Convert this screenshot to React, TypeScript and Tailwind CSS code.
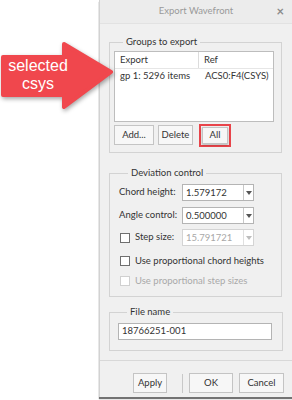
import React from "react";

// small dropdown-style field used in the deviation group
function ComboField({ value, disabled }: { value: string; disabled?: boolean }) {
  return (
    <div
      className={
        "flex h-[17px] w-[72px] items-stretch border bg-white " +
        (disabled ? "border-[#d4d4d4]" : "border-[#b4b4b4]")
      }
    >
      <div
        className={
          "flex flex-1 items-center pl-[3px] leading-none " +
          (disabled ? "text-[#a8a8a8]" : "text-[#333]")
        }
      >
        {value}
      </div>
      <div
        className={
          "flex w-[10px] items-center justify-center border-l " +
          (disabled ? "border-[#e0e0e0]" : "border-[#c8c8c8]")
        }
      >
        <svg width="6" height="4" viewBox="0 0 6 4">
          <path d="M0 0 L6 0 L3 4 Z" fill={disabled ? "#bdbdbd" : "#555"} />
        </svg>
      </div>
    </div>
  );
}

function CheckBox({ disabled }: { disabled?: boolean }) {
  return (
    <span
      className={
        "inline-block h-[10px] w-[10px] border bg-white " +
        (disabled ? "border-[#d0d0d0]" : "border-[#6f6f6f]")
      }
    />
  );
}

function Btn({ children, w }: { children: React.ReactNode; w: string }) {
  return (
    <button
      className={
        "flex h-[20px] items-center justify-center border border-[#c4c4c4] bg-[#f7f7f7] text-[#333] " +
        w
      }
    >
      {children}
    </button>
  );
}

export default function App() {
  return (
    <div
      className="relative h-[400px] w-[292px] overflow-hidden whitespace-nowrap bg-white text-[9.5px]"
      style={{ fontFamily: 'Lato, "Noto Sans", sans-serif' }}
    >
      <div className="ml-[99px] flex h-[397px] w-[193px] flex-col border-l border-[#d2d2d2] bg-[#f0f0f0] shadow-[0_2px_1px_rgba(0,0,0,0.55)]">
        {/* title bar */}
        <div className="relative flex h-[24px] items-center justify-center border-b border-[#e2e2e2] bg-[#ececec]">
          <span className="text-[9.5px] text-[#9a9a9a]">Export Wavefront</span>
          <span className="absolute right-[8px] top-[5px] text-[13px] font-bold leading-none text-[#8a8a8a]">
            ×
          </span>
        </div>

        {/* Groups to export */}
        <fieldset className="ml-[9px] mr-[10px] mt-[11px] border border-[#d3d3d3] px-[4px] pb-[7px]">
          <legend className="ml-[9px] px-[3px] leading-[14px] text-[#333]">Groups to export</legend>
          <div className="mr-[3px] mt-[2px] h-[71px] border border-[#bdbdbd] bg-white text-[#333]">
            <div className="flex h-[17px] border-b border-[#e6e6e6]">
              <div className="flex w-[84px] items-center border-r border-[#dcdcdc] pl-[5px]">Export</div>
              <div className="flex items-center pl-[5px]">Ref</div>
            </div>
            <div className="flex h-[15px] items-center">
              <div className="w-[85px] pl-[5px]">gp 1: 5296 items</div>
              <div className="pl-[5px]">ACS0:F4(CSYS)</div>
            </div>
          </div>
          <div className="mt-[3px] flex h-[20px] items-center">
            <Btn w="w-[40px]">Add...</Btn>
            <div className="ml-[4px]">
              <Btn w="w-[35px]">Delete</Btn>
            </div>
            <div className="ml-[6px] border-2 border-[#e8444a] p-[1px]">
              <button className="flex h-[17px] w-[26px] items-center justify-center border border-[#c4c4c4] bg-[#f7f7f7] text-[#333] shadow-[0_1px_2px_rgba(0,0,0,0.25)]">
                All
              </button>
            </div>
          </div>
        </fieldset>

        {/* Deviation control */}
        <fieldset className="ml-[9px] mr-[10px] mt-[13px] border border-[#d3d3d3] pb-[8px] pl-[9px]">
          <legend className="ml-[9px] px-[3px] leading-[14px] text-[#333]">Deviation control</legend>
          <div className="mt-[4px] flex h-[17px] items-center">
            <span className="w-[63px] text-[#333]">Chord height:</span>
            <ComboField value="1.579172" />
          </div>
          <div className="mt-[6px] flex h-[17px] items-center">
            <span className="w-[63px] text-[#333]">Angle control:</span>
            <ComboField value="0.500000" />
          </div>
          <div className="mt-[5px] flex h-[17px] items-center">
            <span className="flex w-[63px] items-center text-[#333]">
              <span className="ml-[1px] mr-[5px] flex">
                <CheckBox />
              </span>
              Step size:
            </span>
            <ComboField value="15.791721" disabled />
          </div>
          <div className="mt-[8px] flex h-[14px] items-center text-[#333]">
            <span className="ml-[1px] mr-[5px] flex">
              <CheckBox />
            </span>
            Use proportional chord heights
          </div>
          <div className="mt-[6px] flex h-[14px] items-center text-[#a9a9a9]">
            <span className="ml-[1px] mr-[5px] flex">
              <CheckBox disabled />
            </span>
            Use proportional step sizes
          </div>
        </fieldset>

        {/* File name */}
        <fieldset className="ml-[9px] mr-[9px] mt-[8px] border border-[#d3d3d3] pb-[10px] pl-[8px] pr-[10px]">
          <legend className="ml-[9px] px-[3px] leading-[14px] text-[#333]">File name</legend>
          <div className="mt-[4px] flex h-[17px] items-center border border-[#b4b4b4] bg-white pl-[3px] text-[#333]">
            18766251-001
          </div>
        </fieldset>

        {/* footer */}
        <div className="mt-[9px] border-t border-[#d8d8d8]" />
        <div className="mt-[12px] flex items-center">
          <div className="ml-[33px]">
            <Btn w="w-[34px]">Apply</Btn>
          </div>
          <div className="ml-[15px] h-[19px] w-px bg-[#c8c8c8]" />
          <div className="ml-[6px]">
            <Btn w="w-[44px]">OK</Btn>
          </div>
          <div className="ml-[6px]">
            <Btn w="w-[45px]">Cancel</Btn>
          </div>
        </div>
      </div>

      {/* callout arrow */}
      <div className="absolute left-0 top-[38px] h-[75px] w-[120px]">
        <svg
          width="120"
          height="75"
          viewBox="0 0 120 75"
          className="drop-shadow-[1px_2px_2px_rgba(0,0,0,0.35)]"
        >
          <path
            d="M3 19 L64 19 L64 6 L111 34 L64 69 L64 57 L3 57 Z"
            fill="#f0474d"
            stroke="#f0474d"
            strokeWidth="4"
            strokeLinejoin="round"
          />
        </svg>
        <div
          className="absolute left-[2px] top-[19px] flex w-[72px] flex-col items-center text-[16px] leading-[18px] text-white"
          style={{ fontFamily: '"Liberation Sans", Arial, sans-serif' }}
        >
          <span>selected</span>
          <span>csys</span>
        </div>
      </div>
    </div>
  );
}
